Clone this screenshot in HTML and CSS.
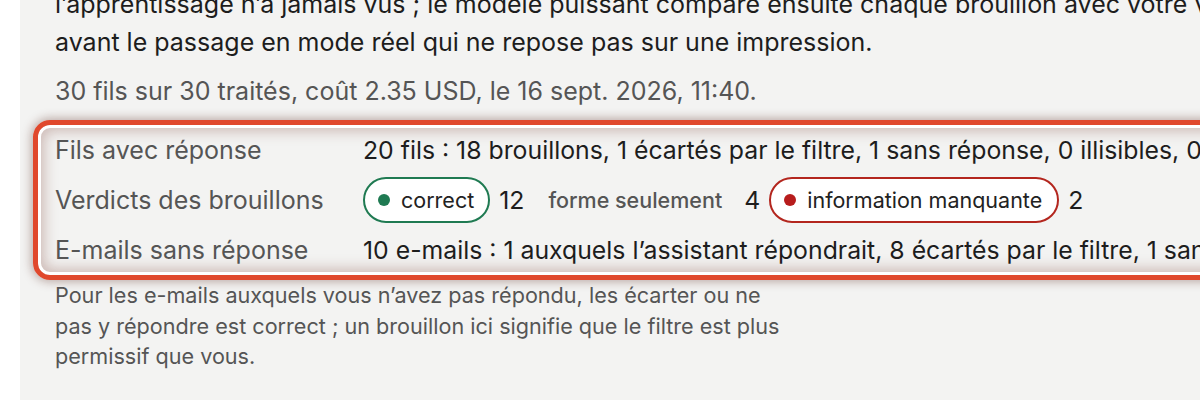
FILE: index.html
```html
<!DOCTYPE html>
<html lang="fr">
<head>
<meta charset="utf-8">
<link rel="stylesheet" href="styles.css">
</head>
<body>
<div class="panel">
  <p class="intro"><span class="line">l’apprentissage n’a jamais vus ; le modèle puissant compare ensuite chaque brouillon avec votre vraie réponse, un contrôle</span><span class="line">avant le passage en mode réel qui ne repose pas sur une impression.</span></p>
  <p class="meta">30 fils sur 30 traités, coût 2.35 USD, le 16 sept. 2026, 11:40.</p>
  <div class="rows">
    <div class="label">Fils avec réponse</div>
    <div class="value">20 fils : 18 brouillons, 1 écartés par le filtre, 1 sans réponse, 0 illisibles, 0 erreurs</div>
    <div class="label">Verdicts des brouillons</div>
    <div class="value verdicts">
      <span class="pill ok"><span class="dot"></span>correct</span><span class="count">12</span>
      <span class="pill plain">forme seulement</span><span class="count">4</span>
      <span class="pill bad"><span class="dot"></span>information manquante</span><span class="count">2</span>
    </div>
    <div class="label">E-mails sans réponse</div>
    <div class="value">10 e-mails : 1 auxquels l’assistant répondrait, 8 écartés par le filtre, 1 sans réponse</div>
  </div>
  <p class="note">Pour les e-mails auxquels vous n’avez pas répondu, les écarter ou ne pas y répondre est correct ; un brouillon ici signifie que le filtre est plus permissif que vous.</p>
</div>
</body>
</html>
```
FILE: styles.css
```css
html, body {
  margin: 0;
  padding: 0;
  background: #ffffff;
  overflow: hidden;
  height: 400px;
}
body {
  font-family: Inter, "Noto Sans", sans-serif;
  color: #1d1d1d;
}
.panel {
  margin-left: 20px;
  width: 1600px;
  height: 400px;
  background: #f3f3f2;
  padding-left: 35px;
  box-sizing: border-box;
  overflow: hidden;
}
.intro {
  margin: -15px 0 0 0;
  font-size: 25px;
  line-height: 38px;
  color: #1d1d1d;
}
.line {
  display: block;
  white-space: nowrap;
}
.meta {
  margin: 15px 0 0 0;
  font-size: 25px;
  line-height: 30px;
  color: #555555;
}
.rows {
  margin: 14px 0 0 -22px;
  border: 5px solid #e0482c;
  border-radius: 17px;
  padding: 0 0 0 17px;
  display: grid;
  grid-template-columns: 308px auto;
  grid-auto-rows: 50px;
  align-items: center;
  box-shadow: 0 0 10px 2px rgba(90, 40, 30, 0.35),
              inset 0 0 0 3px #ffffff,
              inset 0 0 14px 6px rgba(130, 70, 60, 0.34);
}
.label {
  font-size: 25px;
  color: #555555;
  white-space: nowrap;
}
.value {
  font-size: 24.8px;
  color: #1d1d1d;
  white-space: nowrap;
}
.verdicts {
  display: flex;
  align-items: center;
  gap: 9px;
}
.pill {
  display: inline-flex;
  align-items: center;
  height: 46px;
  box-sizing: border-box;
  padding: 0 14px 0 13px;
  border: 2px solid transparent;
  border-radius: 23px;
  font-size: 21.5px;
  color: #222222;
}
.pill.ok {
  background: #ffffff;
  border-color: #1f7a52;
}
.pill.bad {
  background: #ffffff;
  border-color: #b3261e;
  padding-right: 15px;
}
.pill.plain {
  font-size: 21.5px;
  font-weight: 500;
  color: #555555;
  padding-right: 11px;
}
.dot {
  width: 12px;
  height: 12px;
  border-radius: 50%;
  margin-right: 11px;
}
.ok .dot { background: #1f7a52; }
.bad .dot { background: #b71c1c; }
.count {
  font-size: 24.8px;
  color: #1d1d1d;
}
.note {
  margin: 0;
  width: 738px;
  font-size: 21.6px;
  line-height: 30.5px;
  color: #555555;
}
```
